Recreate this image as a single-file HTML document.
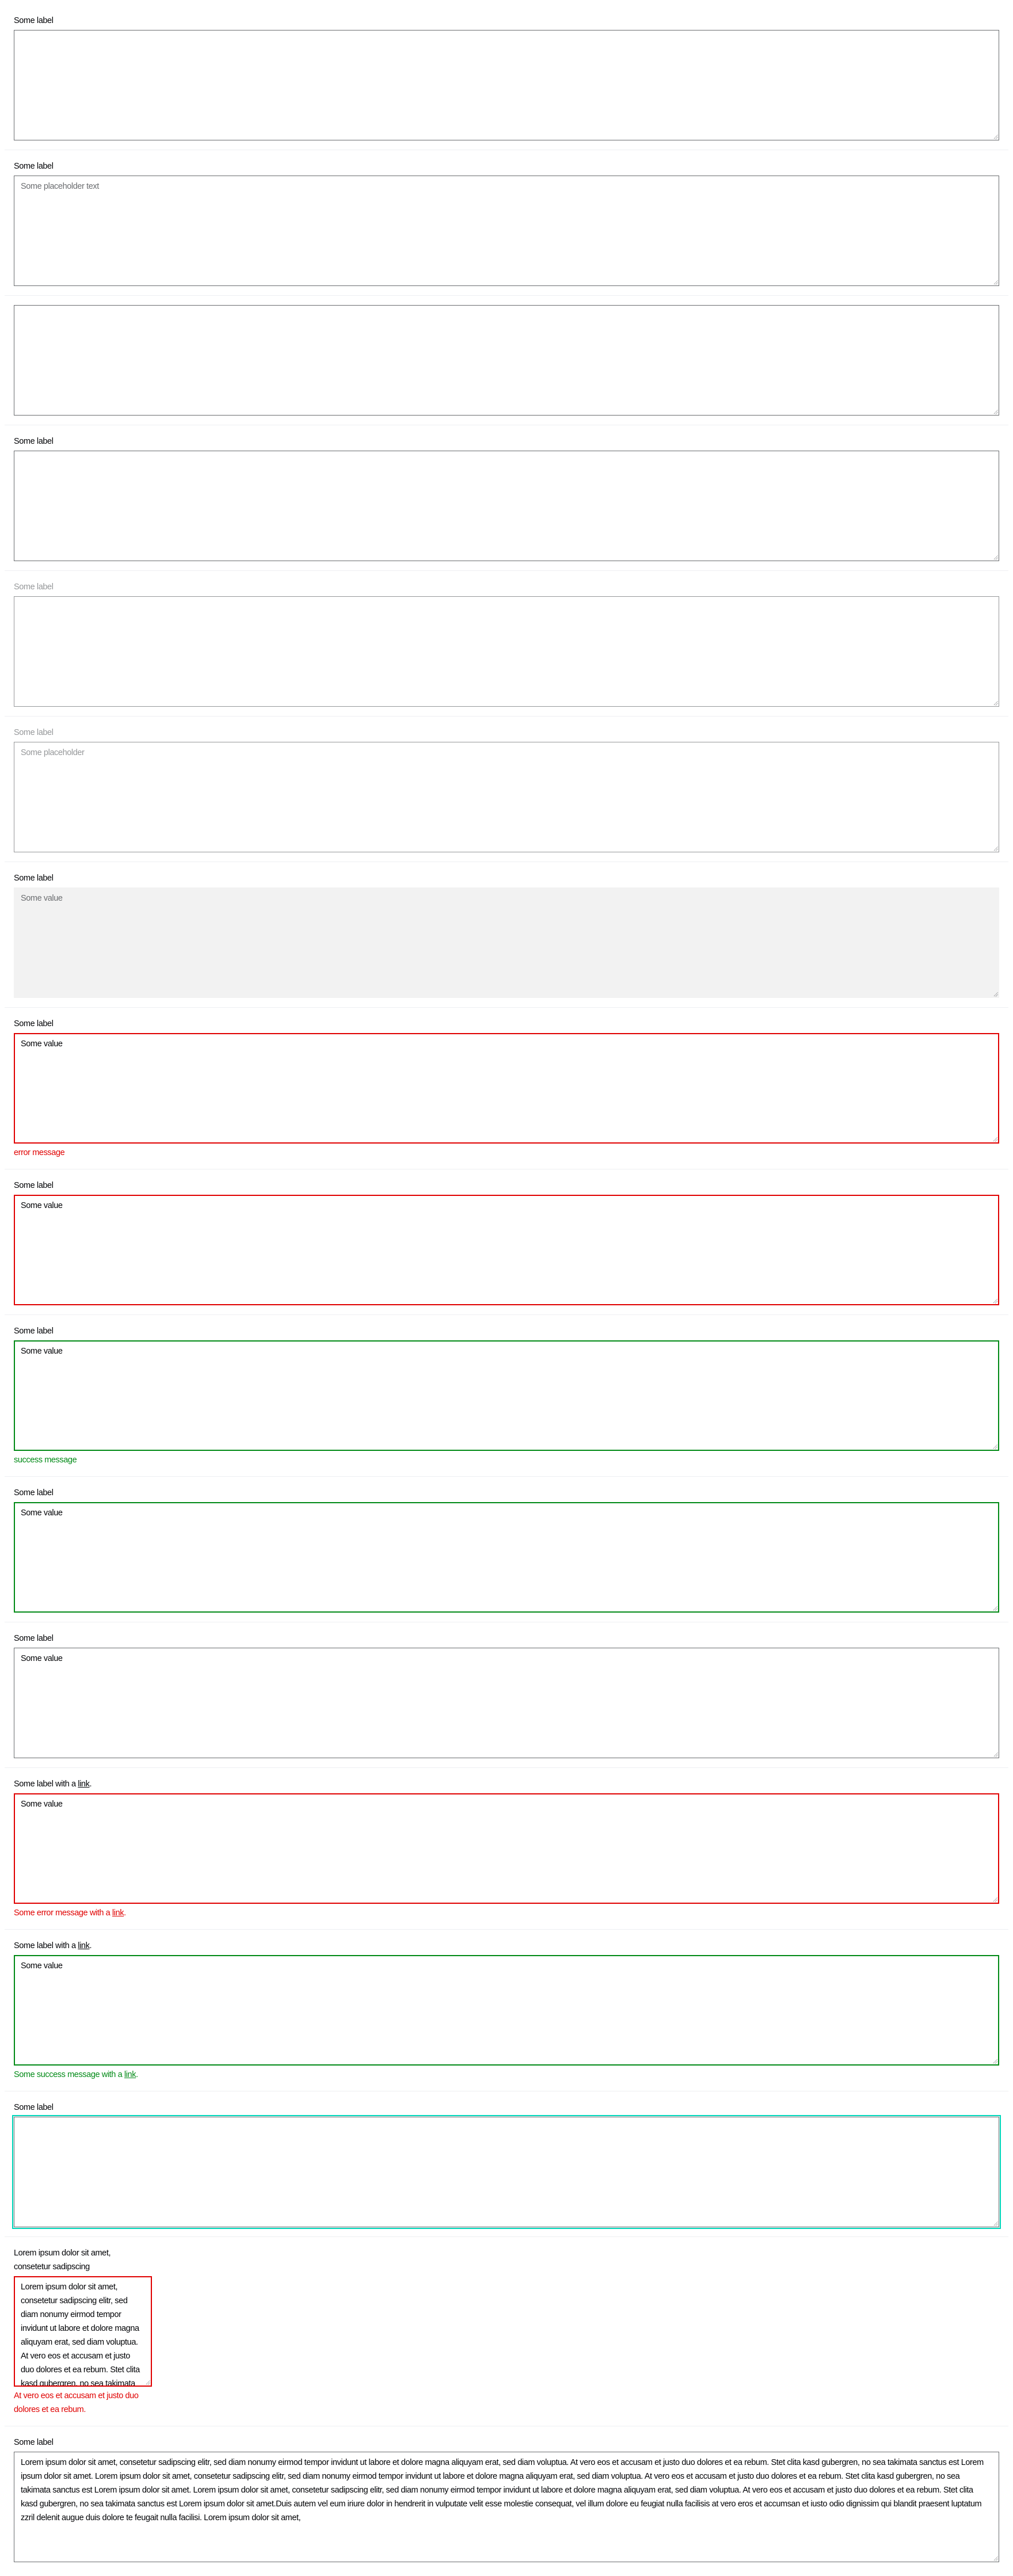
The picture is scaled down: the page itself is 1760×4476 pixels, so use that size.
<!DOCTYPE html>
<html><head><meta charset="utf-8">
<style>
*{box-sizing:border-box;margin:0;padding:0}
html,body{width:1760px;height:4476px;background:#fff;overflow:hidden}
body{font-family:"Liberation Sans",sans-serif;font-size:14.5px;letter-spacing:-0.4px;color:#010205;padding-top:8px}
.s{margin:0 8px;padding:16px 16px;border-bottom:1px solid #eeeff2}
.l{height:24px;line-height:24px;margin-bottom:4px;white-space:nowrap}
.l.d{color:#96989a}
.t{position:relative;height:192px;border:2px solid #6b6d70;border-width:1px;padding:6px 11px;line-height:24px;white-space:nowrap;overflow:hidden;background:#fff}
.t.d{border-color:#96989a}
.t.ro{background:#f2f2f2;border-color:#f2f2f2;color:#6b6d70}
.t.e{border:2px solid #e00000;padding:5px 10px}
.t.ok{border:2px solid #018a16;padding:5px 10px}
.t.f{outline:2px solid #00d5b9;outline-offset:1px}
.ph{color:#6b6d70}
.m{margin-top:4px;line-height:24px;height:24px;white-space:nowrap}
.m.e{color:#e00000}.m.ok{color:#018a16}
a{color:inherit;text-decoration:underline}
.r{position:absolute;right:1px;bottom:1px;width:9px;height:9px}
</style></head><body>
<svg width="0" height="0" style="position:absolute"><defs><symbol id="rz" viewBox="0 0 9 9"><path d="M8.5 1.5L1.5 8.5M8.5 5L5 8.5" stroke="#6b6d70" stroke-width="1" stroke-dasharray="1 1"/></symbol></defs></svg>

<div class="s"><div class="l">Some label</div><div class="t"><svg class="r"><use href="#rz"/></svg></div></div>
<div class="s"><div class="l">Some label</div><div class="t"><span class="ph">Some placeholder text</span><svg class="r"><use href="#rz"/></svg></div></div>
<div class="s"><div class="t"><svg class="r"><use href="#rz"/></svg></div></div>
<div class="s"><div class="l">Some label</div><div class="t"><svg class="r"><use href="#rz"/></svg></div></div>
<div class="s"><div class="l d">Some label</div><div class="t d"><svg class="r"><use href="#rz"/></svg></div></div>
<div class="s"><div class="l d">Some label</div><div class="t d"><span class="ph" style="color:#96989a">Some placeholder</span><svg class="r"><use href="#rz"/></svg></div></div>
<div class="s"><div class="l">Some label</div><div class="t ro">Some value<svg class="r"><use href="#rz"/></svg></div></div>
<div class="s"><div class="l">Some label</div><div class="t e">Some value<svg class="r"><use href="#rz"/></svg></div><div class="m e">error message</div></div>
<div class="s"><div class="l">Some label</div><div class="t e">Some value<svg class="r"><use href="#rz"/></svg></div></div>
<div class="s"><div class="l">Some label</div><div class="t ok">Some value<svg class="r"><use href="#rz"/></svg></div><div class="m ok">success message</div></div>
<div class="s"><div class="l">Some label</div><div class="t ok">Some value<svg class="r"><use href="#rz"/></svg></div></div>
<div class="s"><div class="l">Some label</div><div class="t">Some value<svg class="r"><use href="#rz"/></svg></div></div>
<div class="s"><div class="l">Some label with a <a>link</a>.</div><div class="t e">Some value<svg class="r"><use href="#rz"/></svg></div><div class="m e">Some error message with a <a>link</a>.</div></div>
<div class="s"><div class="l">Some label with a <a>link</a>.</div><div class="t ok">Some value<svg class="r"><use href="#rz"/></svg></div><div class="m ok">Some success message with a <a>link</a>.</div></div>
<div class="s"><div class="l">Some label</div><div class="t f"><svg class="r"><use href="#rz"/></svg></div></div>
<div class="s">
<div class="l" style="height:48px">Lorem ipsum dolor sit amet,<br>consetetur sadipscing</div>
<div class="t e" style="width:240px;font-size:14.5px;letter-spacing:-0.4px">Lorem ipsum dolor sit amet,<br>consetetur sadipscing elitr, sed<br>diam nonumy eirmod tempor<br>invidunt ut labore et dolore magna<br>aliquyam erat, sed diam voluptua.<br>At vero eos et accusam et justo<br>duo dolores et ea rebum. Stet clita<br>kasd gubergren, no sea takimata<svg class="r"><use href="#rz"/></svg></div>
<div class="m e" style="height:48px">At vero eos et accusam et justo duo<br>dolores et ea rebum.</div>
</div>
<div class="s" style="border-bottom:none"><div class="l">Some label</div><div class="t" style="font-size:14.5px;letter-spacing:-0.4px">Lorem ipsum dolor sit amet, consetetur sadipscing elitr, sed diam nonumy eirmod tempor invidunt ut labore et dolore magna aliquyam erat, sed diam voluptua. At vero eos et accusam et justo duo dolores et ea rebum. Stet clita kasd gubergren, no sea takimata sanctus est Lorem<br>ipsum dolor sit amet. Lorem ipsum dolor sit amet, consetetur sadipscing elitr, sed diam nonumy eirmod tempor invidunt ut labore et dolore magna aliquyam erat, sed diam voluptua. At vero eos et accusam et justo duo dolores et ea rebum. Stet clita kasd gubergren, no sea<br>takimata sanctus est Lorem ipsum dolor sit amet. Lorem ipsum dolor sit amet, consetetur sadipscing elitr, sed diam nonumy eirmod tempor invidunt ut labore et dolore magna aliquyam erat, sed diam voluptua. At vero eos et accusam et justo duo dolores et ea rebum. Stet clita<br>kasd gubergren, no sea takimata sanctus est Lorem ipsum dolor sit amet.Duis autem vel eum iriure dolor in hendrerit in vulputate velit esse molestie consequat, vel illum dolore eu feugiat nulla facilisis at vero eros et accumsan et iusto odio dignissim qui blandit praesent luptatum<br>zzril delenit augue duis dolore te feugait nulla facilisi. Lorem ipsum dolor sit amet,<svg class="r"><use href="#rz"/></svg></div></div>
</body></html>
